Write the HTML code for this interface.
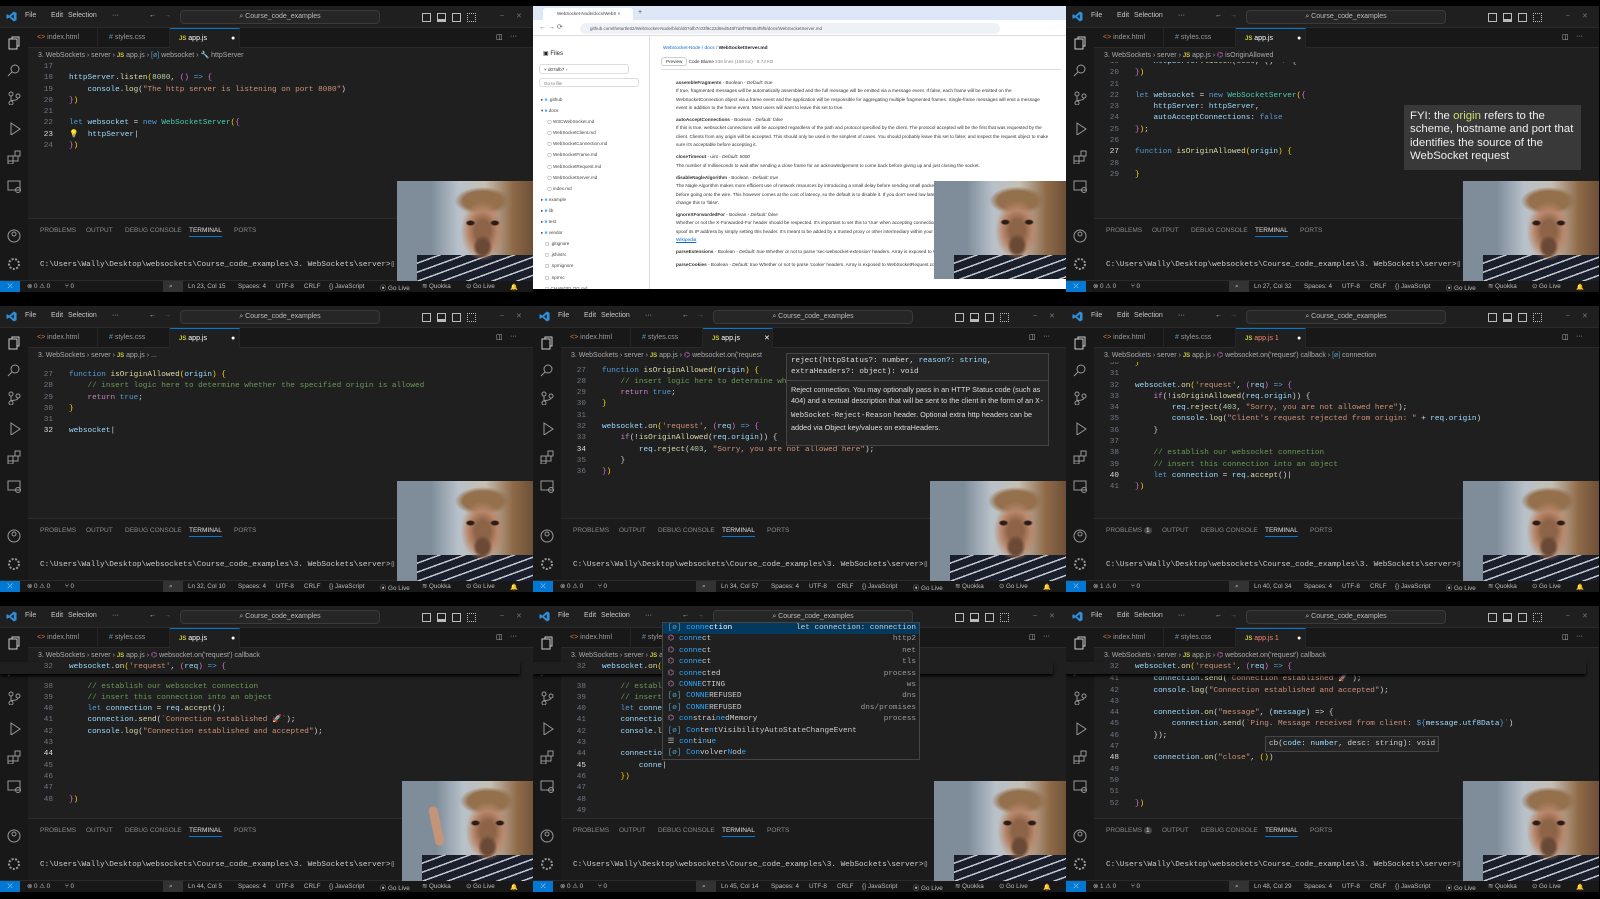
<!DOCTYPE html>
<html><head><meta charset="utf-8">
<style>
*{margin:0;padding:0;box-sizing:border-box}
body{width:1600px;height:899px;background:#000;position:relative;overflow:hidden;font-family:"Liberation Sans",sans-serif}
.tile{position:absolute;width:533px;height:286px;background:#1f1f1f;overflow:hidden;font-size:7px;color:#c8c8c8}
.tile>*{position:absolute}
.tb{left:0;top:0;width:533px;height:22px;background:#1f1f1f;border-bottom:1px solid #2a2a2a}
.tb>*{position:absolute;top:6px}
.logo{left:6px;top:5px}
.srch{left:180px;top:4px!important;width:200px;height:14px;background:#262626;border:1px solid #3a3a3a;border-radius:4px;text-align:center;line-height:12px;color:#bbb}
.li{width:9px;height:9px;border:1px solid #bbb;top:7px!important}
.tabs{left:28px;top:22px;width:505px;height:20px;background:#181818;border-bottom:1px solid #2a2a2a}
.tab{position:absolute;top:0;height:20px;line-height:20px;padding-left:9px;color:#9a9a9a;border-right:1px solid #252525}
.tab.a{background:#1f1f1f;color:#fff;border-top:1px solid #0078d4}
.ic1{color:#e37933}.ic2{color:#519aba}.ic3{color:#cbcb41;font-size:6px;font-weight:bold}
.bc{left:38px;top:43px;width:495px;height:13px;line-height:13px;color:#aaa;background:#1f1f1f;z-index:2;white-space:nowrap}
.act{left:0;top:22px;width:28px;height:252px;background:#181818}
.act svg{position:absolute;left:7px}
.code{left:0;font:7.7px "Liberation Mono",monospace;line-height:11.3px;white-space:pre;color:#d4d4d4}
.code b{font-weight:normal;display:inline-block;width:53px;text-align:right;color:#6e7681;margin-right:16px}
.code b.cur{color:#ddd}
.k{color:#569cd6}.f{color:#dcdcaa}.v{color:#9cdcfe}.s{color:#ce9178}.c{color:#6a9955}.t{color:#4ec9b0}.n{color:#b5cea8}.y{color:#ffd700}.m{color:#da70d6}.q{color:#c586c0}
.sticky{left:0;top:56px;width:520px;height:11.5px;background:#1f1f1f;z-index:1;box-shadow:0 2px 3px #000}
.pn{left:28px;top:212px;width:505px;height:62px;background:#1b1b1b;border-top:1px solid #2b2b2b}
.pt{position:absolute;top:8px;color:#8a8a8a;font-size:6.5px}
.pt.a{color:#e0e0e0;border-bottom:1px solid #0078d4;padding-bottom:2px}
.term{position:absolute;left:12px;top:40px;font:7.7px "Liberation Mono",monospace;color:#ccc;white-space:pre}
.sb{left:0;top:274px;width:533px;height:12px;background:#181818;border-top:1px solid #2b2b2b;color:#bbb;font-size:6.3px}
.sb span{position:absolute;top:2px;white-space:nowrap}
.rem{position:absolute;left:0;top:0;width:20px;height:12px;background:#0078d4;color:#fff;text-align:center;line-height:11px}
.zm{position:absolute;left:163px;top:0;width:20px;height:12px;background:#333}
.cam{left:397px;top:175px;width:136px;height:100px;
background:
radial-gradient(ellipse 5px 3px at 54% 42%,#2a1c16 0 60%,transparent 100%),
radial-gradient(ellipse 5px 3px at 72% 42%,#2a1c16 0 60%,transparent 100%),
radial-gradient(ellipse 10px 12px at 63% 66%,#6a4a36 0 60%,transparent 100%),
radial-gradient(ellipse 22px 30px at 63% 50%,#8e6448 0 35%,#b8866a 65%,transparent 100%),
radial-gradient(ellipse 28px 14px at 63% 20%,#94704c 0 70%,transparent 100%),
repeating-linear-gradient(160deg,#1a1f2e 0 7px,#c8c8cc 7px 8.5px) 20px 74px/100% 30px no-repeat,
linear-gradient(90deg,#7f8d9b 0 25%,#b8c1ca 45%,#c6bfb4 65%,#8f6a48 85%,#6d5038 100%)}
.hov{background:#252526;border:1px solid #454545;z-index:5;color:#ccc}
</style></head><body>

<!-- ============ R1C1 ============ -->
<div class="tile" style="left:0;top:6px">
 <div class="tb"><svg class="logo" width="11" height="11" viewBox="0 0 24 24"><path d="M17 1L23 4V20L17 23L7 14L3 17L1 16V8L3 7L7 10ZM17 7L11 12L17 17Z" fill="#2f8fd8" fill-rule="evenodd"/></svg><span style="left:25px">File</span><span style="left:51px">Edit</span><span style="left:68px">Selection</span><span style="left:112px">···</span><span style="left:149px">←</span><span style="left:164px;color:#666">→</span><div class="srch">⌕ Course_code_examples</div><i class="li" style="left:422px"></i><i class="li" style="left:437px;border-bottom-width:3px"></i><i class="li" style="left:452px"></i><i class="li" style="left:467px;border-style:dotted"></i><span style="left:500px;color:#777">–</span><span style="left:516px;color:#777">✕</span></div>
 <div class="act"><svg width="14" height="14" style="top:8px" fill="none" stroke="#ccc"><rect x="2" y="3" width="8" height="10"/><path d="M5 3V1h7v9h-2"/></svg><svg width="14" height="14" style="top:35px" fill="none" stroke="#999"><circle cx="8" cy="6" r="4"/><path d="M5 9L1 13"/></svg><svg width="14" height="14" style="top:63px" fill="none" stroke="#999"><circle cx="4" cy="3" r="2"/><circle cx="4" cy="12" r="2"/><circle cx="11" cy="5" r="2"/><path d="M4 5v5M11 7c0 3-7 2-7 3"/></svg><svg width="14" height="14" style="top:93px" fill="none" stroke="#999"><path d="M4 2l9 6-9 6z"/></svg><svg width="14" height="14" style="top:122px" fill="none" stroke="#999"><rect x="1" y="6" width="5" height="5"/><rect x="6" y="6" width="5" height="5"/><rect x="1" y="11" width="5" height="3"/><rect x="8" y="1" width="5" height="5"/></svg><svg width="14" height="14" style="top:151px" fill="none" stroke="#999"><rect x="1" y="2" width="12" height="9"/><circle cx="11" cy="11" r="2.5"/></svg><svg width="14" height="14" style="top:201px" fill="none" stroke="#999"><circle cx="7" cy="7" r="6"/><circle cx="7" cy="5" r="2"/></svg><svg width="14" height="14" style="top:229px" fill="none" stroke="#999" stroke-width="2" stroke-dasharray="2 1.5"><circle cx="7" cy="7" r="5"/></svg></div>
 <div class="tabs"><div class="tab" style="left:0;width:70px"><span class="ic1">&lt;&gt;</span> index.html</div><div class="tab" style="left:72px;width:70px"><span class="ic2">#</span> styles.css</div><div class="tab a" style="left:142px;width:70px"><span class="ic3">JS</span> app.js <span style="position:absolute;left:61px">●</span></div><span style="position:absolute;left:468px;top:5px">◫</span><span style="position:absolute;left:482px;top:5px">···</span></div>
 <div class="bc">3. WebSockets › server › <span class="ic3">JS</span> app.js › <span class="ic2">[ø]</span> websocket › <span class="ic2">🔧</span> httpServer</div>
 <div class="code" style="top:56px"><div><b>17</b></div><div><b>18</b><span class="v">httpServer</span>.<span class="f">listen</span><span class="y">(</span><span class="n">8080</span>, <span class="m">()</span> <span class="k">=&gt;</span> <span class="m">{</span></div><div><b>19</b>    <span class="v">console</span>.<span class="f">log</span>(<span class="s">"The http server is listening on port 8080"</span>)</div><div><b>20</b><span class="m">}</span><span class="y">)</span></div><div><b>21</b></div><div><b>22</b><span class="k">let</span> <span class="v">websocket</span> = <span class="k">new</span> <span class="t">WebSocketServer</span><span class="y">(</span><span class="m">{</span></div><div><b class="cur">23</b>💡  <span class="v">httpServer</span>|</div><div><b>24</b><span class="m">}</span><span class="y">)</span></div></div>
 <div class="pn"><span class="pt" style="left:12px">PROBLEMS</span><span class="pt" style="left:58px">OUTPUT</span><span class="pt" style="left:97px">DEBUG CONSOLE</span><span class="pt a" style="left:161px">TERMINAL</span><span class="pt" style="left:206px">PORTS</span><div class="term">C:\Users\Wally\Desktop\websockets\Course_code_examples\3. WebSockets\server&gt;▯</div></div>
 <div class="sb"><div class="rem">⤫</div><span style="left:27px">⊗ 0 ⚠ 0</span><span style="left:65px">⑂ 0</span><div class="zm"></div><span style="left:169px">⌕</span><span style="left:188px">Ln 23, Col 15</span><span style="left:238px">Spaces: 4</span><span style="left:276px">UTF-8</span><span style="left:304px">CRLF</span><span style="left:329px">{} JavaScript</span><span style="left:380px">⦿ Go Live</span><span style="left:422px">≋ Quokka</span><span style="left:466px">⊙ Go Live</span><span style="left:510px">🔔</span></div>
 <div class="cam"></div>
</div>

<!-- ============ R1C2 browser ============ -->
<div class="tile" style="left:533px;top:6px;background:#fff;color:#333;font-size:5px">
 <div style="left:0;top:0;width:533px;height:14px;background:#dde7f5"></div>
 <div style="left:10px;top:2px;width:90px;height:12px;background:#fff;border-radius:3px 3px 0 0;padding:3px 0 0 14px;font-size:4.5px;color:#444">WebSocket-Node/docs/WebS ×</div>
 <div style="left:105px;top:3px;font-size:7px;color:#555">+</div>
 <div style="left:0;top:14px;width:533px;height:16px;background:#fff;border-bottom:1px solid #ddd"></div>
 <div style="left:6px;top:17px;font-size:7px;color:#666">←  →  ⟳</div>
 <div style="left:47px;top:17px;width:420px;height:11px;background:#eef2f8;border-radius:6px;padding:3px 0 0 10px;font-size:4.5px;color:#555">github.com/theturtle32/WebSocket-Node/blob/d07afb7c03f9c22d8ed548f7a9f798454f5f5/docs/WebSocketServer.md</div>
 <div style="left:0;top:30px;width:117px;height:256px;border-right:1px solid #ddd;background:#fff"></div>
 <div style="left:10px;top:44px;font-size:6px;color:#222">▣ Files</div>
 <div style="left:6px;top:58px;width:90px;height:10px;border:1px solid #ddd;border-radius:3px;padding:2px 0 0 4px;font-size:4.5px">⑂ d07afb7 ▾</div>
 <div style="left:6px;top:72px;width:100px;height:9px;border:1px solid #ddd;border-radius:3px;padding:2px 0 0 4px;font-size:4.5px;color:#777">Go to file</div>
 <div style="left:8px;top:88px;font-size:4.6px;line-height:11.1px;color:#444;white-space:pre">▸ <span style="color:#54aeff">■</span> .github
▾ <span style="color:#54aeff">■</span> docs
     ▢ W3CWebSocket.md
     ▢ WebSocketClient.md
     ▢ WebSocketConnection.md
     ▢ WebSocketFrame.md
     ▢ WebSocketRequest.md
     ▢ WebSocketServer.md
     ▢ index.md
▸ <span style="color:#54aeff">■</span> example
▸ <span style="color:#54aeff">■</span> lib
▸ <span style="color:#54aeff">■</span> test
▸ <span style="color:#54aeff">■</span> vendor
   ▢ .gitignore
   ▢ .jshintrc
   ▢ .npmignore
   ▢ .npmrc
   ▢ CHANGELOG.md</div>
 <div style="left:130px;top:40px;font-size:4.8px;color:#0969da">WebSocket-Node / docs / <b style="color:#222">WebSocketServer.md</b></div>
 <div style="left:128px;top:53px;width:400px;height:11px;border-bottom:1px solid #ddd;font-size:4.6px;color:#333"><span style="border:1px solid #ccc;padding:1px 4px;border-radius:3px">Preview</span>  Code   Blame   <span style="color:#888">236 lines (198 loc) · 8.73 KB</span></div>
 <div style="left:143px;top:73px;width:375px;font-size:4.7px;line-height:8.3px;color:#333">
 <b>assembleFragments</b> - Boolean - <i>Default: true</i><br>If true, fragmented messages will be automatically assembled and the full message will be emitted via a message event. If false, each frame will be emitted on the WebSocketConnection object via a frame event and the application will be responsible for aggregating multiple fragmented frames. Single-frame messages will emit a message event in addition to the frame event. Most users will want to leave this set to true.<br><div style="height:4px"></div>
 <b>autoAcceptConnections</b> - Boolean - <i>Default: false</i><br>If this is true, websocket connections will be accepted regardless of the path and protocol specified by the client. The protocol accepted will be the first that was requested by the client. Clients from any origin will be accepted. This should only be used in the simplest of cases. You should probably leave this set to false; and inspect the request object to make sure it's acceptable before accepting it.<br><div style="height:4px"></div>
 <b>closeTimeout</b> - uint - <i>Default: 5000</i><br>The number of milliseconds to wait after sending a close frame for an acknowledgement to come back before giving up and just closing the socket.<br><div style="height:4px"></div>
 <b>disableNagleAlgorithm</b> - Boolean - <i>Default: true</i><br>The Nagle Algorithm makes more efficient use of network resources by introducing a small delay before sending small packets so that multiple messages can be batched together before going onto the wire. This however comes at the cost of latency, so the default is to disable it. If you don't need low latency and are streaming lots of small messages, you can change this to 'false'.<br><div style="height:4px"></div>
 <b>ignoreXForwardedFor</b> - Boolean - <i>Default: false</i><br>Whether or not the X-Forwarded-For header should be respected. It's important to set this to 'true' when accepting connections from untrusted clients, as a malicious client could spoof its IP address by simply setting this header. It's meant to be added by a trusted proxy or other intermediary within your own infrastructure. More info: <span style="color:#0969da;text-decoration:underline">X-Forwarded-For on Wikipedia</span><br><div style="height:4px"></div>
 <b>parseExtensions</b> - Boolean - <i>Default: true</i> Whether or not to parse 'sec-websocket-extension' headers. Array is exposed to WebSocketRequest.requestedExtensions.<br><div style="height:4px"></div>
 <b>parseCookies</b> - Boolean - <i>Default: true</i> Whether or not to parse 'cookie' headers. Array is exposed to WebSocketRequest.cookies.</div>
 <div class="cam" style="left:401px;top:175px;width:132px;height:98px"></div>
 <div style="left:0;top:283px;width:533px;height:3px;background:#000"></div>
</div>

<!-- ============ R1C3 ============ -->
<div class="tile" style="left:1066px;top:6px">
 <div class="tb"><svg class="logo" width="11" height="11" viewBox="0 0 24 24"><path d="M17 1L23 4V20L17 23L7 14L3 17L1 16V8L3 7L7 10ZM17 7L11 12L17 17Z" fill="#2f8fd8" fill-rule="evenodd"/></svg><span style="left:25px">File</span><span style="left:51px">Edit</span><span style="left:68px">Selection</span><span style="left:112px">···</span><span style="left:149px">←</span><span style="left:164px;color:#666">→</span><div class="srch">⌕ Course_code_examples</div><i class="li" style="left:422px"></i><i class="li" style="left:437px;border-bottom-width:3px"></i><i class="li" style="left:452px"></i><i class="li" style="left:467px;border-style:dotted"></i><span style="left:500px;color:#777">–</span><span style="left:516px;color:#777">✕</span></div>
 <div class="act"><svg width="14" height="14" style="top:8px" fill="none" stroke="#ccc"><rect x="2" y="3" width="8" height="10"/><path d="M5 3V1h7v9h-2"/></svg><svg width="14" height="14" style="top:35px" fill="none" stroke="#999"><circle cx="8" cy="6" r="4"/><path d="M5 9L1 13"/></svg><svg width="14" height="14" style="top:63px" fill="none" stroke="#999"><circle cx="4" cy="3" r="2"/><circle cx="4" cy="12" r="2"/><circle cx="11" cy="5" r="2"/><path d="M4 5v5M11 7c0 3-7 2-7 3"/></svg><svg width="14" height="14" style="top:93px" fill="none" stroke="#999"><path d="M4 2l9 6-9 6z"/></svg><svg width="14" height="14" style="top:122px" fill="none" stroke="#999"><rect x="1" y="6" width="5" height="5"/><rect x="6" y="6" width="5" height="5"/><rect x="1" y="11" width="5" height="3"/><rect x="8" y="1" width="5" height="5"/></svg><svg width="14" height="14" style="top:151px" fill="none" stroke="#999"><rect x="1" y="2" width="12" height="9"/><circle cx="11" cy="11" r="2.5"/></svg><svg width="14" height="14" style="top:201px" fill="none" stroke="#999"><circle cx="7" cy="7" r="6"/><circle cx="7" cy="5" r="2"/></svg><svg width="14" height="14" style="top:229px" fill="none" stroke="#999" stroke-width="2" stroke-dasharray="2 1.5"><circle cx="7" cy="7" r="5"/></svg></div>
 <div class="tabs"><div class="tab" style="left:0;width:70px"><span class="ic1">&lt;&gt;</span> index.html</div><div class="tab" style="left:72px;width:70px"><span class="ic2">#</span> styles.css</div><div class="tab a" style="left:142px;width:70px"><span class="ic3">JS</span> app.js <span style="position:absolute;left:61px">●</span></div><span style="position:absolute;left:468px;top:5px">◫</span><span style="position:absolute;left:482px;top:5px">···</span></div>
 <div class="bc">3. WebSockets › server › <span class="ic3">JS</span> app.js › <span class="m">⌬</span> isOriginAllowed</div>
 <div class="code" style="top:51px"><div><b>19</b>    <span class="v">httpServer</span>.<span class="f">listen</span>(<span class="n">8080</span>, () =&gt; {</div><div><b>20</b><span class="m">}</span><span class="y">)</span></div><div><b>21</b></div><div><b>22</b><span class="k">let</span> <span class="v">websocket</span> = <span class="k">new</span> <span class="t">WebSocketServer</span><span class="y">(</span><span class="m">{</span></div><div><b>23</b>    <span class="v">httpServer</span>: <span class="v">httpServer</span>,</div><div><b>24</b>    <span class="v">autoAcceptConnections</span>: <span class="k">false</span></div><div><b>25</b><span class="m">}</span><span class="y">)</span>;</div><div><b>26</b></div><div><b class="cur">27</b><span class="k">function</span> <span class="f">isOriginAllowed</span><span class="y">(</span><span class="v">origin</span><span class="y">)</span> <span class="y">{</span></div><div><b>28</b></div><div><b>29</b><span class="y">}</span></div></div>
 <div class="hov" style="left:338px;top:99px;width:177px;height:65px;background:#393939;border:none;font-size:11.4px;line-height:13.3px;color:#eee;padding:5px 6px">FYI: the <span style="color:#c8dc6e">origin</span> refers to the scheme, hostname and port that identifies the source of the WebSocket request</div>
 <div class="pn"><span class="pt" style="left:12px">PROBLEMS</span><span class="pt" style="left:58px">OUTPUT</span><span class="pt" style="left:97px">DEBUG CONSOLE</span><span class="pt a" style="left:161px">TERMINAL</span><span class="pt" style="left:206px">PORTS</span><div class="term">C:\Users\Wally\Desktop\websockets\Course_code_examples\3. WebSockets\server&gt;▯</div></div>
 <div class="sb"><div class="rem">⤫</div><span style="left:27px">⊗ 0 ⚠ 0</span><span style="left:65px">⑂ 0</span><div class="zm"></div><span style="left:169px">⌕</span><span style="left:188px">Ln 27, Col 32</span><span style="left:238px">Spaces: 4</span><span style="left:276px">UTF-8</span><span style="left:304px">CRLF</span><span style="left:329px">{} JavaScript</span><span style="left:380px">⦿ Go Live</span><span style="left:422px">≋ Quokka</span><span style="left:466px">⊙ Go Live</span><span style="left:510px">🔔</span></div>
 <div class="cam"></div>
</div>

<!-- ============ R2C1 ============ -->
<div class="tile" style="left:0;top:306px">
 <div class="tb"><svg class="logo" width="11" height="11" viewBox="0 0 24 24"><path d="M17 1L23 4V20L17 23L7 14L3 17L1 16V8L3 7L7 10ZM17 7L11 12L17 17Z" fill="#2f8fd8" fill-rule="evenodd"/></svg><span style="left:25px">File</span><span style="left:51px">Edit</span><span style="left:68px">Selection</span><span style="left:112px">···</span><span style="left:149px">←</span><span style="left:164px;color:#666">→</span><div class="srch">⌕ Course_code_examples</div><i class="li" style="left:422px"></i><i class="li" style="left:437px;border-bottom-width:3px"></i><i class="li" style="left:452px"></i><i class="li" style="left:467px;border-style:dotted"></i><span style="left:500px;color:#777">–</span><span style="left:516px;color:#777">✕</span></div>
 <div class="act"><svg width="14" height="14" style="top:8px" fill="none" stroke="#ccc"><rect x="2" y="3" width="8" height="10"/><path d="M5 3V1h7v9h-2"/></svg><svg width="14" height="14" style="top:35px" fill="none" stroke="#999"><circle cx="8" cy="6" r="4"/><path d="M5 9L1 13"/></svg><svg width="14" height="14" style="top:63px" fill="none" stroke="#999"><circle cx="4" cy="3" r="2"/><circle cx="4" cy="12" r="2"/><circle cx="11" cy="5" r="2"/><path d="M4 5v5M11 7c0 3-7 2-7 3"/></svg><svg width="14" height="14" style="top:93px" fill="none" stroke="#999"><path d="M4 2l9 6-9 6z"/></svg><svg width="14" height="14" style="top:122px" fill="none" stroke="#999"><rect x="1" y="6" width="5" height="5"/><rect x="6" y="6" width="5" height="5"/><rect x="1" y="11" width="5" height="3"/><rect x="8" y="1" width="5" height="5"/></svg><svg width="14" height="14" style="top:151px" fill="none" stroke="#999"><rect x="1" y="2" width="12" height="9"/><circle cx="11" cy="11" r="2.5"/></svg><svg width="14" height="14" style="top:201px" fill="none" stroke="#999"><circle cx="7" cy="7" r="6"/><circle cx="7" cy="5" r="2"/></svg><svg width="14" height="14" style="top:229px" fill="none" stroke="#999" stroke-width="2" stroke-dasharray="2 1.5"><circle cx="7" cy="7" r="5"/></svg></div>
 <div class="tabs"><div class="tab" style="left:0;width:70px"><span class="ic1">&lt;&gt;</span> index.html</div><div class="tab" style="left:72px;width:70px"><span class="ic2">#</span> styles.css</div><div class="tab a" style="left:142px;width:70px"><span class="ic3">JS</span> app.js <span style="position:absolute;left:61px">●</span></div><span style="position:absolute;left:468px;top:5px">◫</span><span style="position:absolute;left:482px;top:5px">···</span></div>
 <div class="bc">3. WebSockets › server › <span class="ic3">JS</span> app.js › ...</div>
 <div class="code" style="top:64px"><div><b>27</b><span class="k">function</span> <span class="f">isOriginAllowed</span><span class="y">(</span><span class="v">origin</span><span class="y">)</span> <span class="y">{</span></div><div><b>28</b>    <span class="c">// insert logic here to determine whether the specified origin is allowed</span></div><div><b>29</b>    <span class="q">return</span> <span class="k">true</span>;</div><div><b>30</b><span class="y">}</span></div><div><b>31</b></div><div><b class="cur">32</b><span class="v">websocket</span>|</div></div>
 <div class="pn"><span class="pt" style="left:12px">PROBLEMS</span><span class="pt" style="left:58px">OUTPUT</span><span class="pt" style="left:97px">DEBUG CONSOLE</span><span class="pt a" style="left:161px">TERMINAL</span><span class="pt" style="left:206px">PORTS</span><div class="term">C:\Users\Wally\Desktop\websockets\Course_code_examples\3. WebSockets\server&gt;▯</div></div>
 <div class="sb"><div class="rem">⤫</div><span style="left:27px">⊗ 0 ⚠ 0</span><span style="left:65px">⑂ 0</span><div class="zm"></div><span style="left:169px">⌕</span><span style="left:188px">Ln 32, Col 10</span><span style="left:238px">Spaces: 4</span><span style="left:276px">UTF-8</span><span style="left:304px">CRLF</span><span style="left:329px">{} JavaScript</span><span style="left:380px">⦿ Go Live</span><span style="left:422px">≋ Quokka</span><span style="left:466px">⊙ Go Live</span><span style="left:510px">🔔</span></div>
 <div class="cam"></div>
</div>

<!-- ============ R2C2 ============ -->
<div class="tile" style="left:533px;top:306px">
 <div class="tb"><svg class="logo" width="11" height="11" viewBox="0 0 24 24"><path d="M17 1L23 4V20L17 23L7 14L3 17L1 16V8L3 7L7 10ZM17 7L11 12L17 17Z" fill="#2f8fd8" fill-rule="evenodd"/></svg><span style="left:25px">File</span><span style="left:51px">Edit</span><span style="left:68px">Selection</span><span style="left:112px">···</span><span style="left:149px">←</span><span style="left:164px;color:#666">→</span><div class="srch">⌕ Course_code_examples</div><i class="li" style="left:422px"></i><i class="li" style="left:437px;border-bottom-width:3px"></i><i class="li" style="left:452px"></i><i class="li" style="left:467px;border-style:dotted"></i><span style="left:500px;color:#777">–</span><span style="left:516px;color:#777">✕</span></div>
 <div class="act"><svg width="14" height="14" style="top:8px" fill="none" stroke="#ccc"><rect x="2" y="3" width="8" height="10"/><path d="M5 3V1h7v9h-2"/></svg><svg width="14" height="14" style="top:35px" fill="none" stroke="#999"><circle cx="8" cy="6" r="4"/><path d="M5 9L1 13"/></svg><svg width="14" height="14" style="top:63px" fill="none" stroke="#999"><circle cx="4" cy="3" r="2"/><circle cx="4" cy="12" r="2"/><circle cx="11" cy="5" r="2"/><path d="M4 5v5M11 7c0 3-7 2-7 3"/></svg><svg width="14" height="14" style="top:93px" fill="none" stroke="#999"><path d="M4 2l9 6-9 6z"/></svg><svg width="14" height="14" style="top:122px" fill="none" stroke="#999"><rect x="1" y="6" width="5" height="5"/><rect x="6" y="6" width="5" height="5"/><rect x="1" y="11" width="5" height="3"/><rect x="8" y="1" width="5" height="5"/></svg><svg width="14" height="14" style="top:151px" fill="none" stroke="#999"><rect x="1" y="2" width="12" height="9"/><circle cx="11" cy="11" r="2.5"/></svg><svg width="14" height="14" style="top:201px" fill="none" stroke="#999"><circle cx="7" cy="7" r="6"/><circle cx="7" cy="5" r="2"/></svg><svg width="14" height="14" style="top:229px" fill="none" stroke="#999" stroke-width="2" stroke-dasharray="2 1.5"><circle cx="7" cy="7" r="5"/></svg></div>
 <div class="tabs"><div class="tab" style="left:0;width:70px"><span class="ic1">&lt;&gt;</span> index.html</div><div class="tab" style="left:72px;width:70px"><span class="ic2">#</span> styles.css</div><div class="tab a" style="left:142px;width:70px"><span class="ic3">JS</span> app.js <span style="position:absolute;left:61px">✕</span></div><span style="position:absolute;left:468px;top:5px">◫</span><span style="position:absolute;left:482px;top:5px">···</span></div>
 <div class="bc">3. WebSockets › server › <span class="ic3">JS</span> app.js › <span class="m">⌬</span> websocket.on('request</div>
 <div class="code" style="top:59.5px"><div><b>27</b><span class="k">function</span> <span class="f">isOriginAllowed</span><span class="y">(</span><span class="v">origin</span><span class="y">)</span> <span class="y">{</span></div><div><b>28</b>    <span class="c">// insert logic here to determine whe</span></div><div><b>29</b>    <span class="q">return</span> <span class="k">true</span>;</div><div><b>30</b><span class="y">}</span></div><div><b>31</b></div><div><b>32</b><span class="v">websocket</span>.<span class="f">on</span><span class="y">(</span><span class="s">'request'</span>, <span class="m">(</span><span class="v">req</span><span class="m">)</span> <span class="k">=&gt;</span> <span class="m">{</span></div><div><b>33</b>    <span class="q">if</span>(!<span class="f">isOriginAllowed</span>(<span class="v">req</span>.<span class="v">origin</span>)) {</div><div><b class="cur">34</b>        <span class="v">req</span>.<span class="f">reject</span>(<span class="n">403</span>, <span class="s">"Sorry, you are not allowed here"</span>);</div><div><b>35</b>    }</div><div><b>36</b><span class="m">}</span><span class="y">)</span></div></div>
 <div class="hov" style="left:253px;top:47px;width:263px;height:93px"><div style="font:7.6px 'Liberation Mono',monospace;line-height:11px;padding:2px 4px;color:#ddd;border-bottom:1px solid #454545">reject(httpStatus?: number, <span class="v">reason?: string</span>,<br>extraHeaders?: object): void</div><div style="font-size:7.3px;line-height:11.3px;padding:3px 4px;color:#ddd">Reject connection. You may optionally pass in an HTTP Status code (such as 404) and a textual description that will be sent to the client in the form of an <span style="font-family:'Liberation Mono'">X-WebSocket-Reject-Reason</span> header. Optional extra http headers can be added via Object key/values on extraHeaders.</div></div>
 <div class="pn"><span class="pt" style="left:12px">PROBLEMS</span><span class="pt" style="left:58px">OUTPUT</span><span class="pt" style="left:97px">DEBUG CONSOLE</span><span class="pt a" style="left:161px">TERMINAL</span><span class="pt" style="left:206px">PORTS</span><div class="term">C:\Users\Wally\Desktop\websockets\Course_code_examples\3. WebSockets\server&gt;▯</div></div>
 <div class="sb"><div class="rem">⤫</div><span style="left:27px">⊗ 0 ⚠ 0</span><span style="left:65px">⑂ 0</span><div class="zm"></div><span style="left:169px">⌕</span><span style="left:188px">Ln 34, Col 57</span><span style="left:238px">Spaces: 4</span><span style="left:276px">UTF-8</span><span style="left:304px">CRLF</span><span style="left:329px">{} JavaScript</span><span style="left:380px">⦿ Go Live</span><span style="left:422px">≋ Quokka</span><span style="left:466px">⊙ Go Live</span><span style="left:510px">🔔</span></div>
 <div class="cam"></div>
</div>

<!-- ============ R2C3 ============ -->
<div class="tile" style="left:1066px;top:306px">
 <div class="tb"><svg class="logo" width="11" height="11" viewBox="0 0 24 24"><path d="M17 1L23 4V20L17 23L7 14L3 17L1 16V8L3 7L7 10ZM17 7L11 12L17 17Z" fill="#2f8fd8" fill-rule="evenodd"/></svg><span style="left:25px">File</span><span style="left:51px">Edit</span><span style="left:68px">Selection</span><span style="left:112px">···</span><span style="left:149px">←</span><span style="left:164px;color:#666">→</span><div class="srch">⌕ Course_code_examples</div><i class="li" style="left:422px"></i><i class="li" style="left:437px;border-bottom-width:3px"></i><i class="li" style="left:452px"></i><i class="li" style="left:467px;border-style:dotted"></i><span style="left:500px;color:#777">–</span><span style="left:516px;color:#777">✕</span></div>
 <div class="act"><svg width="14" height="14" style="top:8px" fill="none" stroke="#ccc"><rect x="2" y="3" width="8" height="10"/><path d="M5 3V1h7v9h-2"/></svg><svg width="14" height="14" style="top:35px" fill="none" stroke="#999"><circle cx="8" cy="6" r="4"/><path d="M5 9L1 13"/></svg><svg width="14" height="14" style="top:63px" fill="none" stroke="#999"><circle cx="4" cy="3" r="2"/><circle cx="4" cy="12" r="2"/><circle cx="11" cy="5" r="2"/><path d="M4 5v5M11 7c0 3-7 2-7 3"/></svg><svg width="14" height="14" style="top:93px" fill="none" stroke="#999"><path d="M4 2l9 6-9 6z"/></svg><svg width="14" height="14" style="top:122px" fill="none" stroke="#999"><rect x="1" y="6" width="5" height="5"/><rect x="6" y="6" width="5" height="5"/><rect x="1" y="11" width="5" height="3"/><rect x="8" y="1" width="5" height="5"/></svg><svg width="14" height="14" style="top:151px" fill="none" stroke="#999"><rect x="1" y="2" width="12" height="9"/><circle cx="11" cy="11" r="2.5"/></svg><svg width="14" height="14" style="top:201px" fill="none" stroke="#999"><circle cx="7" cy="7" r="6"/><circle cx="7" cy="5" r="2"/></svg><svg width="14" height="14" style="top:229px" fill="none" stroke="#999" stroke-width="2" stroke-dasharray="2 1.5"><circle cx="7" cy="7" r="5"/></svg></div>
 <div class="tabs"><div class="tab" style="left:0;width:70px"><span class="ic1">&lt;&gt;</span> index.html</div><div class="tab" style="left:72px;width:70px"><span class="ic2">#</span> styles.css</div><div class="tab a" style="left:142px;width:70px;color:#f48771"><span class="ic3">JS</span> app.js  1<span style="position:absolute;left:61px;color:#fff">●</span></div><span style="position:absolute;left:468px;top:5px">◫</span><span style="position:absolute;left:482px;top:5px">···</span></div>
 <div class="bc">3. WebSockets › server › <span class="ic3">JS</span> app.js › <span class="m">⌬</span> websocket.on('request') callback › <span class="ic2">[ø]</span> connection</div>
 <div class="code" style="top:52px"><div><b>30</b><span class="y">}</span></div><div><b>31</b></div><div><b>32</b><span class="v">websocket</span>.<span class="f">on</span><span class="y">(</span><span class="s">'request'</span>, <span class="m">(</span><span class="v">req</span><span class="m">)</span> <span class="k">=&gt;</span> <span class="m">{</span></div><div><b>33</b>    <span class="q">if</span>(!<span class="f">isOriginAllowed</span>(<span class="v">req</span>.<span class="v">origin</span>)) {</div><div><b>34</b>        <span class="v">req</span>.<span class="f">reject</span>(<span class="n">403</span>, <span class="s">"Sorry, you are not allowed here"</span>);</div><div><b>35</b>        <span class="v">console</span>.<span class="f">log</span>(<span class="s">"Client's request rejected from origin: "</span> + <span class="v">req</span>.<span class="v">origin</span>)</div><div><b>36</b>    }</div><div><b>37</b></div><div><b>38</b>    <span class="c">// establish our websocket connection</span></div><div><b>39</b>    <span class="c">// insert this connection into an object</span></div><div><b class="cur">40</b>    <span class="k">let</span> <span class="v">connection</span> = <span class="v">req</span>.<span class="f">accept</span>()|</div><div><b>41</b><span class="m">}</span><span class="y">)</span></div></div>
 <div class="pn"><span class="pt" style="left:12px">PROBLEMS <span style="background:#444;border-radius:5px;padding:0 2px;color:#ddd">1</span></span><span class="pt" style="left:68px">OUTPUT</span><span class="pt" style="left:107px">DEBUG CONSOLE</span><span class="pt a" style="left:171px">TERMINAL</span><span class="pt" style="left:216px">PORTS</span><div class="term">C:\Users\Wally\Desktop\websockets\Course_code_examples\3. WebSockets\server&gt;▯</div></div>
 <div class="sb"><div class="rem">⤫</div><span style="left:27px">⊗ 1 ⚠ 0</span><span style="left:65px">⑂ 0</span><div class="zm"></div><span style="left:169px">⌕</span><span style="left:188px">Ln 40, Col 34</span><span style="left:238px">Spaces: 4</span><span style="left:276px">UTF-8</span><span style="left:304px">CRLF</span><span style="left:329px">{} JavaScript</span><span style="left:380px">⦿ Go Live</span><span style="left:422px">≋ Quokka</span><span style="left:466px">⊙ Go Live</span><span style="left:510px">🔔</span></div>
 <div class="cam"></div>
</div>

<!-- ============ R3C1 ============ -->
<div class="tile" style="left:0;top:606px">
 <div class="tb"><svg class="logo" width="11" height="11" viewBox="0 0 24 24"><path d="M17 1L23 4V20L17 23L7 14L3 17L1 16V8L3 7L7 10ZM17 7L11 12L17 17Z" fill="#2f8fd8" fill-rule="evenodd"/></svg><span style="left:25px">File</span><span style="left:51px">Edit</span><span style="left:68px">Selection</span><span style="left:112px">···</span><span style="left:149px">←</span><span style="left:164px;color:#666">→</span><div class="srch">⌕ Course_code_examples</div><i class="li" style="left:422px"></i><i class="li" style="left:437px;border-bottom-width:3px"></i><i class="li" style="left:452px"></i><i class="li" style="left:467px;border-style:dotted"></i><span style="left:500px;color:#777">–</span><span style="left:516px;color:#777">✕</span></div>
 <div class="act"><svg width="14" height="14" style="top:8px" fill="none" stroke="#ccc"><rect x="2" y="3" width="8" height="10"/><path d="M5 3V1h7v9h-2"/></svg><svg width="14" height="14" style="top:35px" fill="none" stroke="#999"><circle cx="8" cy="6" r="4"/><path d="M5 9L1 13"/></svg><svg width="14" height="14" style="top:63px" fill="none" stroke="#999"><circle cx="4" cy="3" r="2"/><circle cx="4" cy="12" r="2"/><circle cx="11" cy="5" r="2"/><path d="M4 5v5M11 7c0 3-7 2-7 3"/></svg><svg width="14" height="14" style="top:93px" fill="none" stroke="#999"><path d="M4 2l9 6-9 6z"/></svg><svg width="14" height="14" style="top:122px" fill="none" stroke="#999"><rect x="1" y="6" width="5" height="5"/><rect x="6" y="6" width="5" height="5"/><rect x="1" y="11" width="5" height="3"/><rect x="8" y="1" width="5" height="5"/></svg><svg width="14" height="14" style="top:151px" fill="none" stroke="#999"><rect x="1" y="2" width="12" height="9"/><circle cx="11" cy="11" r="2.5"/></svg><svg width="14" height="14" style="top:201px" fill="none" stroke="#999"><circle cx="7" cy="7" r="6"/><circle cx="7" cy="5" r="2"/></svg><svg width="14" height="14" style="top:229px" fill="none" stroke="#999" stroke-width="2" stroke-dasharray="2 1.5"><circle cx="7" cy="7" r="5"/></svg></div>
 <div class="tabs"><div class="tab" style="left:0;width:70px"><span class="ic1">&lt;&gt;</span> index.html</div><div class="tab" style="left:72px;width:70px"><span class="ic2">#</span> styles.css</div><div class="tab a" style="left:142px;width:70px"><span class="ic3">JS</span> app.js <span style="position:absolute;left:61px">●</span></div><span style="position:absolute;left:468px;top:5px">◫</span><span style="position:absolute;left:482px;top:5px">···</span></div>
 <div class="bc">3. WebSockets › server › <span class="ic3">JS</span> app.js › <span class="m">⌬</span> websocket.on('request') callback</div>
 <div class="code sticky"><div><b>32</b><span class="v">websocket</span>.<span class="f">on</span><span class="y">(</span><span class="s">'request'</span>, <span class="m">(</span><span class="v">req</span><span class="m">)</span> <span class="k">=&gt;</span> <span class="m">{</span></div></div>
 <div class="code" style="top:75.6px"><div><b>38</b>    <span class="c">// establish our websocket connection</span></div><div><b>39</b>    <span class="c">// insert this connection into an object</span></div><div><b>40</b>    <span class="k">let</span> <span class="v">connection</span> = <span class="v">req</span>.<span class="f">accept</span>();</div><div><b>41</b>    <span class="v">connection</span>.<span class="f">send</span>(<span class="s">`Connection established 🚀`</span>);</div><div><b>42</b>    <span class="v">console</span>.<span class="f">log</span>(<span class="s">"Connection established and accepted"</span>);</div><div><b>43</b></div><div><b class="cur">44</b></div><div><b>45</b></div><div><b>46</b></div><div><b>47</b></div><div><b>48</b><span class="m">}</span><span class="y">)</span></div></div>
 <div class="pn"><span class="pt" style="left:12px">PROBLEMS</span><span class="pt" style="left:58px">OUTPUT</span><span class="pt" style="left:97px">DEBUG CONSOLE</span><span class="pt a" style="left:161px">TERMINAL</span><span class="pt" style="left:206px">PORTS</span><div class="term">C:\Users\Wally\Desktop\websockets\Course_code_examples\3. WebSockets\server&gt;▯</div></div>
 <div class="sb"><div class="rem">⤫</div><span style="left:27px">⊗ 0 ⚠ 0</span><span style="left:65px">⑂ 0</span><div class="zm"></div><span style="left:169px">⌕</span><span style="left:188px">Ln 44, Col 5</span><span style="left:238px">Spaces: 4</span><span style="left:276px">UTF-8</span><span style="left:304px">CRLF</span><span style="left:329px">{} JavaScript</span><span style="left:380px">⦿ Go Live</span><span style="left:422px">≋ Quokka</span><span style="left:466px">⊙ Go Live</span><span style="left:510px">🔔</span></div>
 <div class="cam" style="left:402px"></div>
 <div style="left:432px;top:200px;width:9px;height:40px;background:#c49478;border-radius:5px;transform:rotate(-12deg)"></div>
</div>

<!-- ============ R3C2 ============ -->
<div class="tile" style="left:533px;top:606px">
 <div class="tb"><svg class="logo" width="11" height="11" viewBox="0 0 24 24"><path d="M17 1L23 4V20L17 23L7 14L3 17L1 16V8L3 7L7 10ZM17 7L11 12L17 17Z" fill="#2f8fd8" fill-rule="evenodd"/></svg><span style="left:25px">File</span><span style="left:51px">Edit</span><span style="left:68px">Selection</span><span style="left:112px">···</span><span style="left:149px">←</span><span style="left:164px;color:#666">→</span><div class="srch">⌕ Course_code_examples</div><i class="li" style="left:422px"></i><i class="li" style="left:437px;border-bottom-width:3px"></i><i class="li" style="left:452px"></i><i class="li" style="left:467px;border-style:dotted"></i><span style="left:500px;color:#777">–</span><span style="left:516px;color:#777">✕</span></div>
 <div class="act"><svg width="14" height="14" style="top:8px" fill="none" stroke="#ccc"><rect x="2" y="3" width="8" height="10"/><path d="M5 3V1h7v9h-2"/></svg><svg width="14" height="14" style="top:35px" fill="none" stroke="#999"><circle cx="8" cy="6" r="4"/><path d="M5 9L1 13"/></svg><svg width="14" height="14" style="top:63px" fill="none" stroke="#999"><circle cx="4" cy="3" r="2"/><circle cx="4" cy="12" r="2"/><circle cx="11" cy="5" r="2"/><path d="M4 5v5M11 7c0 3-7 2-7 3"/></svg><svg width="14" height="14" style="top:93px" fill="none" stroke="#999"><path d="M4 2l9 6-9 6z"/></svg><svg width="14" height="14" style="top:122px" fill="none" stroke="#999"><rect x="1" y="6" width="5" height="5"/><rect x="6" y="6" width="5" height="5"/><rect x="1" y="11" width="5" height="3"/><rect x="8" y="1" width="5" height="5"/></svg><svg width="14" height="14" style="top:151px" fill="none" stroke="#999"><rect x="1" y="2" width="12" height="9"/><circle cx="11" cy="11" r="2.5"/></svg><svg width="14" height="14" style="top:201px" fill="none" stroke="#999"><circle cx="7" cy="7" r="6"/><circle cx="7" cy="5" r="2"/></svg><svg width="14" height="14" style="top:229px" fill="none" stroke="#999" stroke-width="2" stroke-dasharray="2 1.5"><circle cx="7" cy="7" r="5"/></svg></div>
 <div class="tabs"><div class="tab" style="left:0;width:70px"><span class="ic1">&lt;&gt;</span> index.html</div><div class="tab" style="left:72px;width:70px"><span class="ic2">#</span> styles.css</div><div class="tab a" style="left:142px;width:70px"><span class="ic3">JS</span> app.js <span style="position:absolute;left:61px">●</span></div><span style="position:absolute;left:468px;top:5px">◫</span><span style="position:absolute;left:482px;top:5px">···</span></div>
 <div class="bc">3. WebSockets › server › <span class="ic3">JS</span> app.js › <span class="m">⌬</span> websocket.on('message') callback</div>
 <div class="code sticky"><div><b>32</b><span class="v">websocket</span>.<span class="f">on</span><span class="y">(</span><span class="s">'request'</span>, <span class="m">(</span><span class="v">req</span><span class="m">)</span> <span class="k">=&gt;</span> <span class="m">{</span></div></div>
 <div class="code" style="top:75.6px"><div><b>38</b>    <span class="c">// establish our websocket connection</span></div><div><b>39</b>    <span class="c">// insert this connection into an object</span></div><div><b>40</b>    <span class="k">let</span> <span class="v">connection</span> = <span class="v">req</span>.<span class="f">accept</span>();</div><div><b>41</b>    <span class="v">connection</span>.<span class="f">send</span>(<span class="s">`Connection established`</span>);</div><div><b>42</b>    <span class="v">console</span>.<span class="f">log</span>(<span class="s">"Connection established"</span>);</div><div><b>43</b></div><div><b>44</b>    <span class="v">connection</span>.<span class="f">on</span>(<span class="s">"message"</span>, (<span class="v">message</span>) =&gt; {</div><div><b class="cur">45</b>        <span class="v">conne</span>|</div><div><b>46</b>    <span class="y">})</span></div><div><b>47</b></div><div><b>48</b></div><div><b>49</b></div></div>
 <div class="hov" style="left:129px;top:16px;width:258px;height:138px;background:#202020;font:7.7px 'Liberation Mono',monospace;line-height:11.4px;white-space:pre;z-index:6"><div style="background:#04395e;color:#fff;position:relative"> <span class="ic2">[ø]</span> <span style="color:#2aaaff">conne</span>ction<span style="position:absolute;right:3px;color:#ccc">let connection: connection</span></div><div style="position:relative"> <span class="q">⌬</span> <span style="color:#2aaaff">conne</span>ct<span style="position:absolute;right:3px;color:#999">http2</span></div><div style="position:relative"> <span class="q">⌬</span> <span style="color:#2aaaff">conne</span>ct<span style="position:absolute;right:3px;color:#999">net</span></div><div style="position:relative"> <span class="q">⌬</span> <span style="color:#2aaaff">conne</span>ct<span style="position:absolute;right:3px;color:#999">tls</span></div><div style="position:relative"> <span class="q">⌬</span> <span style="color:#2aaaff">conne</span>cted<span style="position:absolute;right:3px;color:#999">process</span></div><div style="position:relative"> <span class="q">⌬</span> <span style="color:#2aaaff">CONNE</span>CTING<span style="position:absolute;right:3px;color:#999">ws</span></div><div style="position:relative"> <span class="ic2">[ø]</span> <span style="color:#2aaaff">CONNE</span>REFUSED<span style="position:absolute;right:3px;color:#999">dns</span></div><div style="position:relative"> <span class="ic2">[ø]</span> <span style="color:#2aaaff">CONNE</span>REFUSED<span style="position:absolute;right:3px;color:#999">dns/promises</span></div><div style="position:relative"> <span class="q">⌬</span> <span style="color:#2aaaff">con</span>strai<span style="color:#2aaaff">ne</span>dMemory<span style="position:absolute;right:3px;color:#999">process</span></div><div> <span class="ic2">[ø]</span> <span style="color:#2aaaff">Con</span>te<span style="color:#2aaaff">n</span>tVisibilityAutoStateChangeEvent</div><div> <span style="color:#bbb">☰</span> <span style="color:#2aaaff">con</span>ti<span style="color:#2aaaff">n</span>u<span style="color:#2aaaff">e</span></div><div> <span class="ic2">[ø]</span> <span style="color:#2aaaff">Con</span>volver<span style="color:#2aaaff">N</span>od<span style="color:#2aaaff">e</span></div></div>
 <div class="pn"><span class="pt" style="left:12px">PROBLEMS</span><span class="pt" style="left:58px">OUTPUT</span><span class="pt" style="left:97px">DEBUG CONSOLE</span><span class="pt a" style="left:161px">TERMINAL</span><span class="pt" style="left:206px">PORTS</span><div class="term">C:\Users\Wally\Desktop\websockets\Course_code_examples\3. WebSockets\server&gt;▯</div></div>
 <div class="sb"><div class="rem">⤫</div><span style="left:27px">⊗ 0 ⚠ 0</span><span style="left:65px">⑂ 0</span><div class="zm"></div><span style="left:169px">⌕</span><span style="left:188px">Ln 45, Col 14</span><span style="left:238px">Spaces: 4</span><span style="left:276px">UTF-8</span><span style="left:304px">CRLF</span><span style="left:329px">{} JavaScript</span><span style="left:380px">⦿ Go Live</span><span style="left:422px">≋ Quokka</span><span style="left:466px">⊙ Go Live</span><span style="left:510px">🔔</span></div>
 <div class="cam" style="left:401px"></div>
</div>

<!-- ============ R3C3 ============ -->
<div class="tile" style="left:1066px;top:606px">
 <div class="tb"><svg class="logo" width="11" height="11" viewBox="0 0 24 24"><path d="M17 1L23 4V20L17 23L7 14L3 17L1 16V8L3 7L7 10ZM17 7L11 12L17 17Z" fill="#2f8fd8" fill-rule="evenodd"/></svg><span style="left:25px">File</span><span style="left:51px">Edit</span><span style="left:68px">Selection</span><span style="left:112px">···</span><span style="left:149px">←</span><span style="left:164px;color:#666">→</span><div class="srch">⌕ Course_code_examples</div><i class="li" style="left:422px"></i><i class="li" style="left:437px;border-bottom-width:3px"></i><i class="li" style="left:452px"></i><i class="li" style="left:467px;border-style:dotted"></i><span style="left:500px;color:#777">–</span><span style="left:516px;color:#777">✕</span></div>
 <div class="act"><svg width="14" height="14" style="top:8px" fill="none" stroke="#ccc"><rect x="2" y="3" width="8" height="10"/><path d="M5 3V1h7v9h-2"/></svg><svg width="14" height="14" style="top:35px" fill="none" stroke="#999"><circle cx="8" cy="6" r="4"/><path d="M5 9L1 13"/></svg><svg width="14" height="14" style="top:63px" fill="none" stroke="#999"><circle cx="4" cy="3" r="2"/><circle cx="4" cy="12" r="2"/><circle cx="11" cy="5" r="2"/><path d="M4 5v5M11 7c0 3-7 2-7 3"/></svg><svg width="14" height="14" style="top:93px" fill="none" stroke="#999"><path d="M4 2l9 6-9 6z"/></svg><svg width="14" height="14" style="top:122px" fill="none" stroke="#999"><rect x="1" y="6" width="5" height="5"/><rect x="6" y="6" width="5" height="5"/><rect x="1" y="11" width="5" height="3"/><rect x="8" y="1" width="5" height="5"/></svg><svg width="14" height="14" style="top:151px" fill="none" stroke="#999"><rect x="1" y="2" width="12" height="9"/><circle cx="11" cy="11" r="2.5"/></svg><svg width="14" height="14" style="top:201px" fill="none" stroke="#999"><circle cx="7" cy="7" r="6"/><circle cx="7" cy="5" r="2"/></svg><svg width="14" height="14" style="top:229px" fill="none" stroke="#999" stroke-width="2" stroke-dasharray="2 1.5"><circle cx="7" cy="7" r="5"/></svg></div>
 <div class="tabs"><div class="tab" style="left:0;width:70px"><span class="ic1">&lt;&gt;</span> index.html</div><div class="tab" style="left:72px;width:70px"><span class="ic2">#</span> styles.css</div><div class="tab a" style="left:142px;width:70px;color:#f48771"><span class="ic3">JS</span> app.js  1<span style="position:absolute;left:61px;color:#fff">●</span></div><span style="position:absolute;left:468px;top:5px">◫</span><span style="position:absolute;left:482px;top:5px">···</span></div>
 <div class="bc">3. WebSockets › server › <span class="ic3">JS</span> app.js › <span class="m">⌬</span> websocket.on('request') callback</div>
 <div class="code sticky"><div><b>32</b><span class="v">websocket</span>.<span class="f">on</span><span class="y">(</span><span class="s">'request'</span>, <span class="m">(</span><span class="v">req</span><span class="m">)</span> <span class="k">=&gt;</span> <span class="m">{</span></div></div>
 <div class="code" style="top:68.3px"><div><b>41</b>    <span class="v">connection</span>.<span class="f">send</span>(<span class="s">`Connection established 🚀`</span>);</div><div><b>42</b>    <span class="v">console</span>.<span class="f">log</span>(<span class="s">"Connection established and accepted"</span>);</div><div><b>43</b></div><div><b>44</b>    <span class="v">connection</span>.<span class="f">on</span>(<span class="s">"message"</span>, (<span class="v">message</span>) =&gt; {</div><div><b>45</b>        <span class="v">connection</span>.<span class="f">send</span>(<span class="s">`Ping. Message received from client: </span><span class="k">${</span><span class="v">message</span>.<span class="v">utf8Data</span><span class="k">}</span><span class="s">`</span>)</div><div><b>46</b>    });</div><div><b>47</b></div><div><b class="cur">48</b>    <span class="v">connection</span>.<span class="f">on</span>(<span class="s">"close"</span>, <span class="y">()</span>)</div><div><b>49</b></div><div><b>50</b></div><div><b>51</b></div><div><b>52</b><span class="m">}</span><span class="y">)</span></div></div>
 <div class="hov" style="left:199px;top:130px;width:174px;height:16px;font:7.7px 'Liberation Mono',monospace;line-height:14px;padding-left:3px;white-space:pre">cb(<span class="v">code: number</span>, desc: string): void</div>
 <div class="pn"><span class="pt" style="left:12px">PROBLEMS <span style="background:#444;border-radius:5px;padding:0 2px;color:#ddd">1</span></span><span class="pt" style="left:68px">OUTPUT</span><span class="pt" style="left:107px">DEBUG CONSOLE</span><span class="pt a" style="left:171px">TERMINAL</span><span class="pt" style="left:216px">PORTS</span><div class="term">C:\Users\Wally\Desktop\websockets\Course_code_examples\3. WebSockets\server&gt;▯</div></div>
 <div class="sb"><div class="rem">⤫</div><span style="left:27px">⊗ 1 ⚠ 0</span><span style="left:65px">⑂ 0</span><div class="zm"></div><span style="left:169px">⌕</span><span style="left:188px">Ln 48, Col 29</span><span style="left:238px">Spaces: 4</span><span style="left:276px">UTF-8</span><span style="left:304px">CRLF</span><span style="left:329px">{} JavaScript</span><span style="left:380px">⦿ Go Live</span><span style="left:422px">≋ Quokka</span><span style="left:466px">⊙ Go Live</span><span style="left:510px">🔔</span></div>
 <div class="cam"></div>
</div>

</body></html>
